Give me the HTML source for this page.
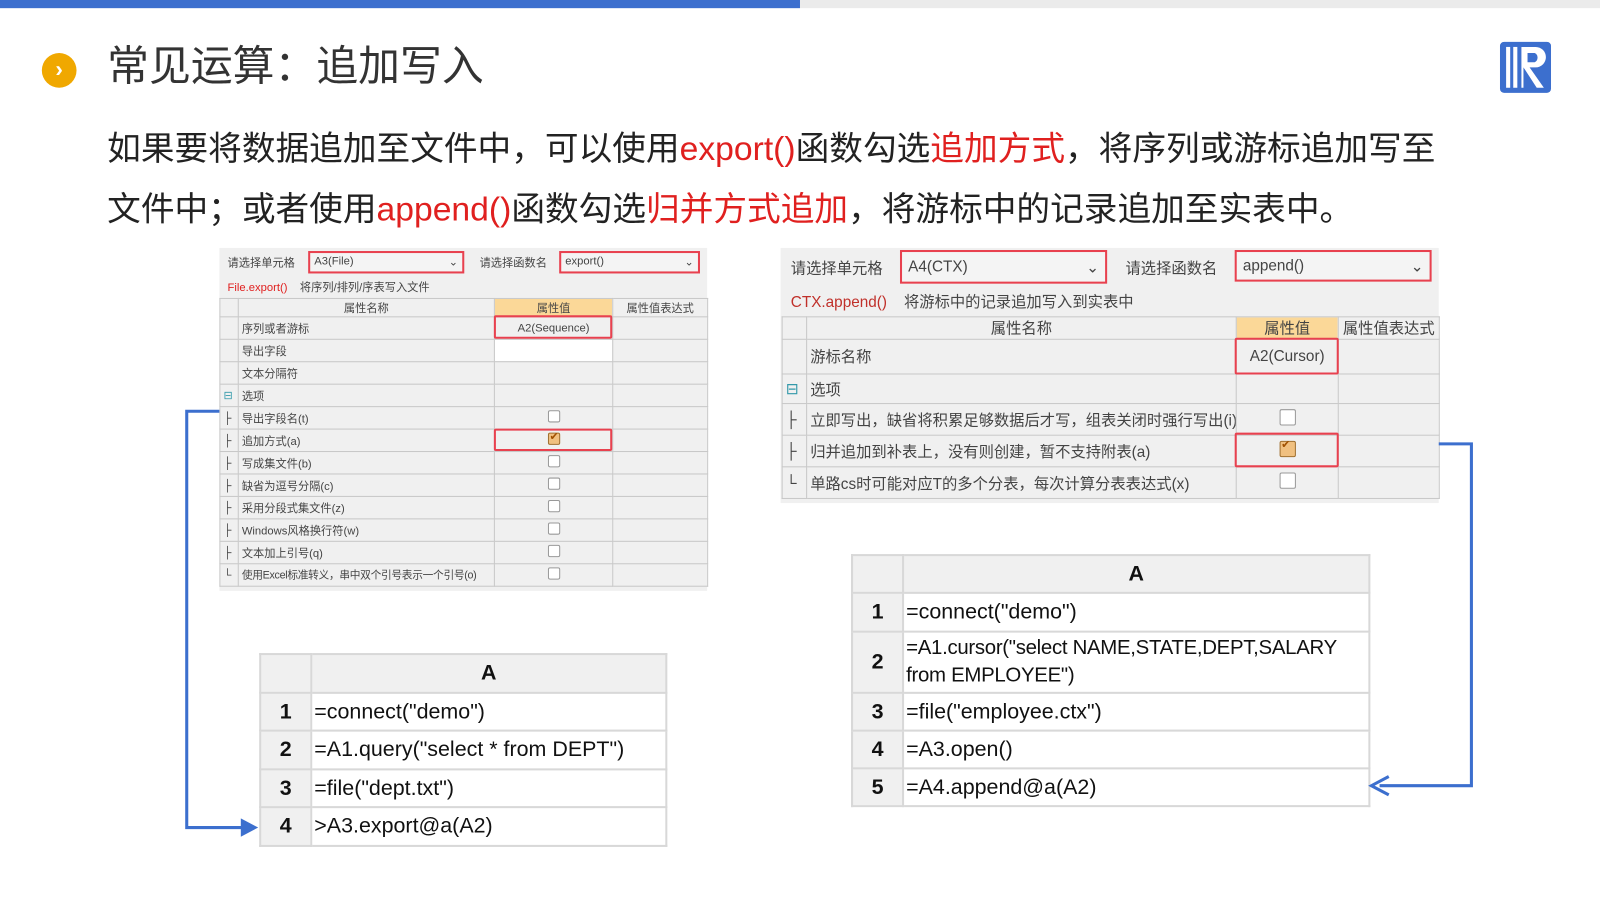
<!DOCTYPE html>
<html><head><meta charset="utf-8"><style>
*{margin:0;padding:0;box-sizing:border-box}
html,body{width:1600px;height:900px;overflow:hidden;background:#fff}
#w{position:absolute;left:0;top:0;width:1568px;height:882px;transform:scale(1.0204);transform-origin:0 0;font-family:"Liberation Sans","Noto Sans CJK SC",sans-serif;color:#222}
.a{position:absolute}
.red{color:#e0201f}
.p{font-size:33px;line-height:59px;left:105px;white-space:nowrap}
.panel{background:#f0f0f0;font-size:11px;color:#444}
table{border-collapse:collapse;position:absolute}
.panel table{table-layout:fixed}
td{border:1px solid #c8c8c8;padding:0 3px;white-space:nowrap;overflow:hidden}
.rb{position:absolute;border:2px solid #e8414f;border-radius:2px}
.cb{display:inline-block;width:12px;height:12px;border:1px solid #999;border-radius:2px;background:#fff}
.cbk{background:#f0c080;border-color:#a07030;position:relative}
.cbk:after{content:"✔";position:absolute;left:1px;top:-4px;font-size:11px;color:#a05000}
.code{font-size:21px;color:#111}
.code td{border:2px solid #d8d8d8;padding:0 2px}
.code .n{background:#f0f0f0;text-align:center;font-weight:bold;width:50px}
.code .h{background:#f0f0f0;text-align:center;font-weight:bold}
</style></head><body><div id="w">
<div class="a" style="left:0;top:0;width:784px;height:8px;background:#3c6fce"></div>
<div class="a" style="left:784px;top:0;width:784px;height:8px;background:#ebebeb"></div>
<div class="a" style="left:41px;top:52px;width:34px;height:34px;border-radius:50%;background:#f0a800;color:#fff;font-size:22px;line-height:32px;text-align:center;font-weight:bold">›</div>
<div class="a" style="left:105px;top:39px;font-size:41px;line-height:52px;color:#333">常见运算：追加写入</div>
<svg class="a" style="left:1469px;top:40px" width="52" height="52" viewBox="0 0 52 52"><rect x="1" y="1" width="50" height="50" rx="4" fill="#3c6fce"/><rect x="7" y="6" width="4" height="40" fill="#fff"/><rect x="14" y="6" width="4" height="40" fill="#fff"/><path d="M22 6h14a10 10 0 0 1 0 20h-6l14 20h-7l-13-20v20h-2z" fill="#fff"/><path d="M28 12h7a5 5 0 0 1 0 9h-7z" fill="#3c6fce"/></svg>
<div class="a p" style="top:116px">如果要将数据追加至文件中，可以使用<span class="red">export()</span>函数勾选<span class="red">追加方式</span>，将序列或游标追加写至</div>
<div class="a p" style="top:175px">文件中；或者使用<span class="red">append()</span>函数勾选<span class="red">归并方式追加</span>，将游标中的记录追加至实表中。</div>

<div class="a panel" style="left:215px;top:243px;width:478px;height:336px">
<div class="a" style="left:8px;top:6px">请选择单元格</div>
<div class="a" style="left:87px;top:3px;width:153px;height:22px;background:#f4f4f4;border:2px solid #e8414f;padding:2px 4px">A3(File)<span style="float:right">⌄</span></div>
<div class="a" style="left:255px;top:6px">请选择函数名</div>
<div class="a" style="left:333px;top:3px;width:138px;height:22px;background:#f4f4f4;border:2px solid #e8414f;padding:2px 4px">export()<span style="float:right">⌄</span></div>
<div class="a" style="left:8px;top:30px"><span class="red">File.export()</span>&nbsp;&nbsp;&nbsp;&nbsp;将序列/排列/序表写入文件</div>
<table style="left:0;top:49px;width:478px">
<colgroup><col style="width:18px"><col style="width:251px"><col style="width:116px"><col style="width:93px"></colgroup>
<tr style="height:18px"><td></td><td style="text-align:center">属性名称</td><td style="text-align:center;background:#fbd898">属性值</td><td style="text-align:center">属性值表达式</td></tr>
<tr style="height:22px"><td></td><td>序列或者游标</td><td style="text-align:center">A2(Sequence)</td><td></td></tr>
<tr style="height:22px"><td></td><td>导出字段</td><td style="background:#fff"></td><td></td></tr>
<tr style="height:22px"><td></td><td>文本分隔符</td><td></td><td></td></tr>
<tr style="height:22px"><td style="color:#39a">⊟</td><td>选项</td><td></td><td></td></tr>
<tr style="height:22px"><td>├</td><td>导出字段名(t)</td><td style="text-align:center"><span class="cb"></span></td><td></td></tr>
<tr style="height:22px"><td>├</td><td>追加方式(a)</td><td style="text-align:center"><span class="cb cbk"></span></td><td></td></tr>
<tr style="height:22px"><td>├</td><td>写成集文件(b)</td><td style="text-align:center"><span class="cb"></span></td><td></td></tr>
<tr style="height:22px"><td>├</td><td>缺省为逗号分隔(c)</td><td style="text-align:center"><span class="cb"></span></td><td></td></tr>
<tr style="height:22px"><td>├</td><td>采用分段式集文件(z)</td><td style="text-align:center"><span class="cb"></span></td><td></td></tr>
<tr style="height:22px"><td>├</td><td>Windows风格换行符(w)</td><td style="text-align:center"><span class="cb"></span></td><td></td></tr>
<tr style="height:22px"><td>├</td><td>文本加上引号(q)</td><td style="text-align:center"><span class="cb"></span></td><td></td></tr>
<tr style="height:22px"><td>└</td><td style="font-size:10.5px;letter-spacing:-0.3px">使用Excel标准转义，串中双个引号表示一个引号(o)</td><td style="text-align:center"><span class="cb"></span></td><td></td></tr>
</table>
<div class="rb" style="left:269px;top:66px;width:116px;height:23px"></div>
<div class="rb" style="left:269px;top:177px;width:116px;height:22px"></div>
</div>

<div class="a panel" style="left:765px;top:243px;width:645px;height:250px;font-size:15px">
<div class="a" style="left:10px;top:9px">请选择单元格</div>
<div class="a" style="left:117px;top:2px;width:203px;height:33px;background:#f4f4f4;border:2px solid #e8414f;padding:6px 6px">A4(CTX)<span style="float:right">⌄</span></div>
<div class="a" style="left:338px;top:9px">请选择函数名</div>
<div class="a" style="left:445px;top:2px;width:193px;height:31px;background:#f4f4f4;border:2px solid #e8414f;padding:5px 6px">append()<span style="float:right">⌄</span></div>
<div class="a" style="left:10px;top:42px"><span style="color:#c0302a">CTX.append()</span>&nbsp;&nbsp;&nbsp;&nbsp;将游标中的记录追加写入到实表中</div>
<table style="left:1px;top:67px;width:644px">
<colgroup><col style="width:24px"><col style="width:421px"><col style="width:100px"><col style="width:99px"></colgroup>
<tr style="height:22px"><td></td><td style="text-align:center">属性名称</td><td style="text-align:center;background:#fbd898">属性值</td><td style="text-align:center">属性值表达式</td></tr>
<tr style="height:34px"><td></td><td>游标名称</td><td style="text-align:center">A2(Cursor)</td><td></td></tr>
<tr style="height:29px"><td style="color:#39a">⊟</td><td>选项</td><td></td><td></td></tr>
<tr style="height:31px"><td>├</td><td>立即写出，缺省将积累足够数据后才写，组表关闭时强行写出(i)</td><td style="text-align:center"><span class="cb" style="width:16px;height:16px"></span></td><td></td></tr>
<tr style="height:31px"><td>├</td><td>归并追加到补表上，没有则创建，暂不支持附表(a)</td><td style="text-align:center"><span class="cb cbk" style="width:16px;height:16px"></span></td><td></td></tr>
<tr style="height:31px"><td>└</td><td>单路cs时可能对应T的多个分表，每次计算分表表达式(x)</td><td style="text-align:center"><span class="cb" style="width:16px;height:16px"></span></td><td></td></tr>
</table>
<div class="rb" style="left:445px;top:88px;width:102px;height:36px"></div>
<div class="rb" style="left:445px;top:181px;width:102px;height:34px"></div>
</div>

<table class="code" style="left:254px;top:640px;width:400px">
<tr style="height:38px"><td class="n"></td><td class="h">A</td></tr>
<tr style="height:37px"><td class="n">1</td><td>=connect("demo")</td></tr>
<tr style="height:38px"><td class="n">2</td><td>=A1.query("select * from DEPT")</td></tr>
<tr style="height:37px"><td class="n">3</td><td>=file("dept.txt")</td></tr>
<tr style="height:38px"><td class="n">4</td><td>&gt;A3.export@a(A2)</td></tr>
</table>
<table class="code" style="left:834px;top:543px;width:509px">
<tr style="height:37px"><td class="n"></td><td class="h">A</td></tr>
<tr style="height:38px"><td class="n">1</td><td>=connect("demo")</td></tr>
<tr style="height:60px"><td class="n">2</td><td style="line-height:27px;font-size:20px;letter-spacing:-0.3px">=A1.cursor("select NAME,STATE,DEPT,SALARY<br>from EMPLOYEE")</td></tr>
<tr style="height:37px"><td class="n">3</td><td>=file("employee.ctx")</td></tr>
<tr style="height:37px"><td class="n">4</td><td>=A3.open()</td></tr>
<tr style="height:37px"><td class="n">5</td><td>=A4.append@a(A2)</td></tr>
</table>

<svg class="a" style="left:0;top:0" width="1568" height="882">
<path d="M215 403H183V811H240" fill="none" stroke="#3c6fce" stroke-width="3"/>
<path d="M236 802L253 811L236 820Z" fill="#3c6fce"/>
<path d="M1410 435H1442V770H1352" fill="none" stroke="#3c6fce" stroke-width="3"/>
<path d="M1361 761L1344 770L1361 779" fill="none" stroke="#3c6fce" stroke-width="3"/>
</svg>
</div></body></html>
